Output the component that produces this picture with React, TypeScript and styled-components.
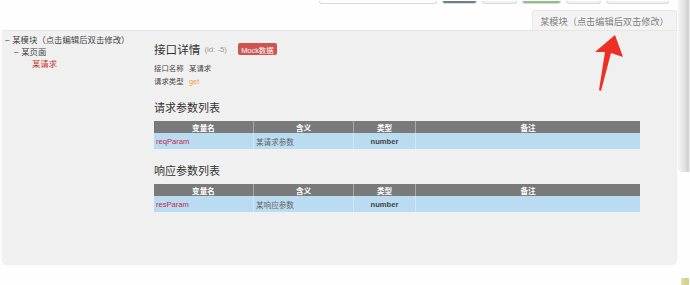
import React from 'react'
import styled, { createGlobalStyle } from 'styled-components'

const GlobalStyle = createGlobalStyle`
  html, body {
    margin: 0;
    padding: 0;
    background: #fff;
  }
  body {
    font-family: "Liberation Sans", "Noto Sans CJK SC", sans-serif;
    color: #333;
  }
`

const Page = styled.div`
  position: relative;
  width: 690px;
  height: 285px;
  overflow: hidden;
  background: #fefefe;
`

const TopBar = styled.div`
  display: flex;
  align-items: flex-end;
  gap: 5px;
  height: 4px;
  padding-left: 319px;
`

const TopItem = styled.div<{ $w: number; $bg: string }>`
  width: ${({ $w }) => $w}px;
  height: 3px;
  background: ${({ $bg }) => $bg};
  border: 1px solid #d9d9d9;
  border-top: none;
  border-radius: 0 0 3px 3px;
  box-sizing: border-box;
`

const TabRow = styled.div`
  display: flex;
  justify-content: flex-end;
  height: 26px;
  padding-right: 13px;
  box-sizing: border-box;
`

const Tab = styled.div`
  margin-top: 6px;
  width: 145px;
  height: 20px;
  display: flex;
  align-items: center;
  justify-content: center;
  background: #f3f3f3;
  border: 1px solid #e8e8e8;
  border-bottom: none;
  border-radius: 3px 3px 0 0;
  box-sizing: border-box;
  font-size: 9.2px;
  color: #808080;
`

const Panel = styled.div`
  display: flex;
  margin: 0 13px 0 2px;
  height: 234px;
  background: #f1f0f0;
  border-top: 1px solid #e6e6e6;
  border-radius: 0 0 5px 5px;
  box-shadow: 0 1px 2px rgba(0, 0, 0, 0.08);
  box-sizing: border-box;
`

const Tree = styled.div`
  width: 152px;
  padding: 3px 0 0 3px;
  box-sizing: border-box;
  font-size: 8.4px;
  line-height: 12px;
`

const TreeItem = styled.div<{ $level: number; $active?: boolean }>`
  padding-left: ${({ $level }) => $level * 9}px;
  color: ${({ $active }) => ($active ? '#c9302c' : '#444')};
  white-space: nowrap;
`

const Content = styled.div`
  flex: 1;
  padding-top: 9px;
`

const TitleRow = styled.div`
  display: flex;
  align-items: center;
  height: 18px;
`

const Title = styled.span`
  font-size: 11.6px;
  color: #333;
`

const IdText = styled.span`
  margin-left: 4px;
  font-size: 7.8px;
  color: #999;
`

const Badge = styled.span`
  margin-left: 11px;
  display: inline-flex;
  align-items: center;
  justify-content: center;
  width: 39px;
  height: 12px;
  background: #cd5451;
  border-radius: 2px;
  color: #fff;
  font-size: 7.4px;
`

const Meta = styled.div`
  margin-top: 4px;
  display: grid;
  grid-template-columns: 35px auto;
  font-size: 7.4px;
  line-height: 13px;
  color: #444;
`

const MetaValue = styled.span<{ $color?: string }>`
  color: ${({ $color }) => $color || '#444'};
`

const SectionTitle = styled.div<{ $top: number }>`
  margin-top: ${({ $top }) => $top}px;
  height: 19px;
  font-size: 11px;
  line-height: 19px;
  color: #333;
`

const Table = styled.div`
  width: 486px;
  margin-top: 3px;
`

const TableRow = styled.div<{ $head?: boolean }>`
  display: grid;
  grid-template-columns: 99px 100px 62px 225px;
  height: ${({ $head }) => ($head ? 12 : 16)}px;
  background: ${({ $head }) => ($head ? '#7a7a7a' : '#b9dcf1')};
  color: ${({ $head }) => ($head ? '#fff' : '#555')};
  font-size: 7.6px;
  font-weight: ${({ $head }) => ($head ? 700 : 400)};
`

const Cell = styled.div<{ $align?: string; $color?: string; $bold?: boolean }>`
  display: flex;
  align-items: center;
  justify-content: ${({ $align }) => $align || 'center'};
  padding-left: ${({ $align }) => ($align === 'flex-start' ? '2px' : '0')};
  border-left: 1px solid rgba(255, 255, 255, 0.35);
  color: ${({ $color }) => $color || 'inherit'};
  font-weight: ${({ $bold }) => ($bold ? 700 : 'inherit')};
  &:first-child {
    border-left: none;
  }
`

const SideShade = styled.div`
  position: absolute;
  right: 0;
  top: 0;
  width: 12px;
  height: 172px;
  background: linear-gradient(to right, #f4f4f4 0%, #e2e2e2 55%, #cfcfcf 85%, #f6f6f6 100%);
  border-radius: 0 0 0 4px;
`

const Arrow = styled.svg`
  position: absolute;
  left: 590px;
  top: 32px;
`

const CornerMark = styled.div`
  position: absolute;
  right: 1px;
  bottom: 0;
  width: 8px;
  height: 7px;
  background: linear-gradient(to right, #e8d9a0, #c9d28a);
  border-radius: 1px;
`

interface Param {
  name: string
  desc: string
  type: string
  note: string
}

const ParamTable = ({ rows }: { rows: Param[] }) => (
  <Table>
    <TableRow $head>
      <Cell>变量名</Cell>
      <Cell>含义</Cell>
      <Cell>类型</Cell>
      <Cell>备注</Cell>
    </TableRow>
    {rows.map(r => (
      <TableRow key={r.name}>
        <Cell $align="flex-start" $color="#c7254e">{r.name}</Cell>
        <Cell $align="flex-start" $color="#666">{r.desc}</Cell>
        <Cell $bold $color="#444">{r.type}</Cell>
        <Cell $align="flex-start">{r.note}</Cell>
      </TableRow>
    ))}
  </Table>
)

const App = () => {
  return (
    <Page>
      <GlobalStyle />
      <TopBar>
        <TopItem $w={118} $bg="#fff" />
        <TopItem $w={35} $bg="#6e7f8c" />
        <TopItem $w={35} $bg="#f2f2f2" />
        <TopItem $w={39} $bg="#8cbf8a" />
        <TopItem $w={35} $bg="#f2f2f2" />
        <TopItem $w={63} $bg="#f2f2f2" />
      </TopBar>
      <TabRow>
        <Tab>某模块（点击编辑后双击修改）</Tab>
      </TabRow>
      <Panel>
        <Tree>
          <TreeItem $level={0}>− 某模块（点击编辑后双击修改）</TreeItem>
          <TreeItem $level={1}>− 某页面</TreeItem>
          <TreeItem $level={3} $active>某请求</TreeItem>
        </Tree>
        <Content>
          <TitleRow>
            <Title>接口详情</Title>
            <IdText>(id: -5)</IdText>
            <Badge>Mock数据</Badge>
          </TitleRow>
          <Meta>
            <span>接口名称</span>
            <MetaValue>某请求</MetaValue>
            <span>请求类型</span>
            <MetaValue $color="#f0a030">get</MetaValue>
          </Meta>
          <SectionTitle $top={11}>请求参数列表</SectionTitle>
          <ParamTable rows={[{ name: 'reqParam', desc: '某请求参数', type: 'number', note: '' }]} />
          <SectionTitle $top={13}>响应参数列表</SectionTitle>
          <ParamTable rows={[{ name: 'resParam', desc: '某响应参数', type: 'number', note: '' }]} />
        </Content>
      </Panel>
      <SideShade />
      <Arrow width="40" height="64" viewBox="590 32 40 64">
        <polygon
          points="615,35 623,57 611,53 601,91 599,90 605,52 595,52"
          fill="#ee2f24"
        />
      </Arrow>
      <CornerMark />
    </Page>
  )
}

export default App
